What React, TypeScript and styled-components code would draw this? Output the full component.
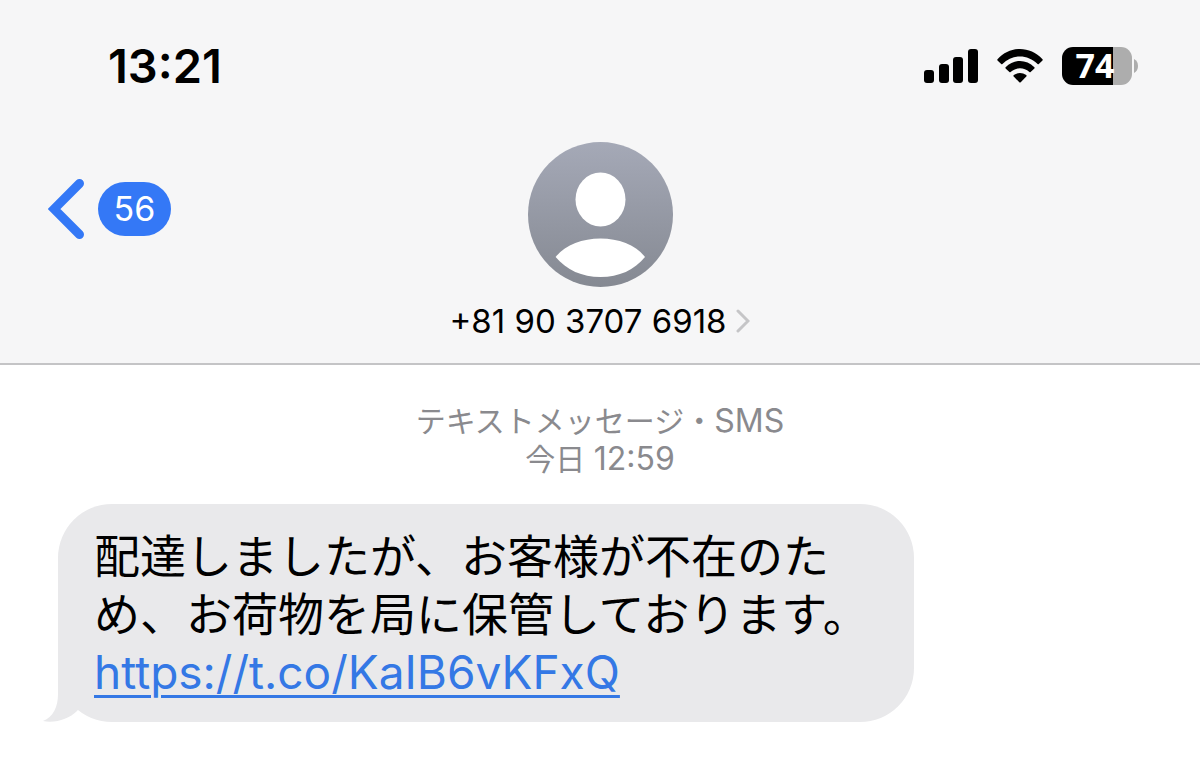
import React from 'react';
import styled, { createGlobalStyle } from 'styled-components';

const GlobalStyle = createGlobalStyle`
  *, *::before, *::after { box-sizing: border-box; }
  body {
    margin: 0;
    background: #ffffff;
    color: #000000;
    font-family: Inter, "Noto Sans CJK JP", sans-serif;
  }
`;

const Header = styled.header`
  background: #f6f6f7;
  border-bottom: 2px solid #c4c4c6;
`;

const StatusBar = styled.div`
  display: flex;
  align-items: center;
  justify-content: space-between;
  padding: 36px 62px 0 108px;
`;

const Clock = styled.time`
  font-size: 47px;
  font-weight: 600;
  line-height: 60px;
`;

const Indicators = styled.div`
  display: flex;
  align-items: center;
  gap: 19px;
`;

const Battery = styled.div`
  display: flex;
  align-items: center;
  gap: 2px;
`;

const BatteryCell = styled.div<{ $level: number }>`
  width: 70px;
  height: 38px;
  padding-right: 4px;
  border-radius: 11px;
  background: linear-gradient(to right, #000000 ${p => p.$level}%, #adadad ${p => p.$level}%);
  color: #ffffff;
  font-family: "Open Sans", sans-serif;
  font-size: 34px;
  font-weight: 700;
  line-height: 36px;
  text-align: center;
`;

const NavBar = styled.nav`
  display: grid;
  grid-template-columns: 1fr auto 1fr;
  align-items: start;
  padding: 46px 48px 22px;
`;

const BackButton = styled.button`
  display: flex;
  align-items: center;
  justify-self: start;
  gap: 12px;
  margin-top: 36px;
  padding: 0;
  border: 0;
  background: none;
  cursor: pointer;
`;

const UnreadBadge = styled.span`
  min-width: 73px;
  padding: 0 15px;
  border-radius: 27px;
  background: #3478f6;
  color: #ffffff;
  font-family: Inter, sans-serif;
  font-size: 34px;
  line-height: 54px;
  text-align: center;
`;

const ContactButton = styled.button`
  display: flex;
  flex-direction: column;
  align-items: center;
  gap: 14px;
  padding: 0;
  border: 0;
  background: none;
  color: inherit;
  font-family: Inter, sans-serif;
  font-size: 33px;
  line-height: 40px;
  cursor: pointer;
`;

const ContactName = styled.span`
  display: flex;
  align-items: center;
  gap: 10px;
`;

const Thread = styled.main`
  padding: 37px 58px 56px;
`;

const ThreadInfo = styled.p`
  margin: 0 0 26px;
  color: #8a8a8e;
  font-size: 30px;
  line-height: 38px;
  text-align: center;
`;

const LatinText = styled.span`
  font-size: 32px;
`;

const Bubble = styled.article`
  position: relative;
  width: fit-content;
  max-width: 79%;
  padding: 23px 36px 21px;
  border-radius: 54px;
  background: #e9e9eb;
  font-size: 46px;
  line-height: 58px;
`;

const BubbleText = styled.p`
  margin: 0;
`;

const BubbleLink = styled.a`
  display: block;
  color: #3478e5;
  text-decoration: underline;
  text-decoration-thickness: 3px;
  text-underline-offset: 6px;
`;

const Tail = styled.svg`
  position: absolute;
  left: -16px;
  bottom: 0;
`;

function SignalIcon() {
  return (
    <svg width="54" height="34" viewBox="0 0 54 34" role="img" aria-label="Signal">
      <rect x="0" y="21" width="10" height="13" rx="3" />
      <rect x="15" y="15" width="10" height="19" rx="3" />
      <rect x="29" y="8" width="10" height="26" rx="3" />
      <rect x="44" y="0" width="10" height="34" rx="3" />
    </svg>
  );
}

function WifiIcon() {
  return (
    <svg width="46" height="34" viewBox="0 0 46 34" role="img" aria-label="Wi-Fi">
      <path d="M.5 10.2C13 -3.4 33 -3.4 45.5 10.2Q46 10.8 45.5 11.4L41.8 15Q41.2 15.5 40.6 14.9C30.5 4.9 15.5 4.9 5.4 14.9Q4.8 15.5 4.2 15L.5 11.4Q0 10.8 .5 10.2Z" />
      <path d="M8.6 18.2C16.9 9.9 29.1 9.9 37.4 18.2Q37.9 18.8 37.4 19.4L33.6 23Q33 23.5 32.4 23C26.8 18 19.2 18 13.6 23Q13 23.5 12.4 23L8.6 19.4Q8.1 18.8 8.6 18.2Z" />
      <path d="M16.8 26.1C20.6 23.2 25.4 23.2 29.2 26.1Q29.9 26.7 29.3 27.4L23.7 33.3Q23 33.9 22.3 33.3L16.7 27.4Q16.1 26.7 16.8 26.1Z" />
    </svg>
  );
}

function BackChevron() {
  return (
    <svg width="38" height="62" viewBox="0 0 38 62" aria-hidden="true">
      <path d="M31.5 5.5L6 31L31.5 56.5" fill="none" stroke="#3478f6" strokeWidth="9" strokeLinecap="round" strokeLinejoin="miter" />
    </svg>
  );
}

function Avatar() {
  return (
    <svg width="145" height="145" viewBox="0 0 145 145" aria-hidden="true">
      <defs>
        <linearGradient id="avatarFill" x1="0" y1="0" x2="0" y2="1">
          <stop offset="0" stopColor="#a5a9b7" />
          <stop offset="1" stopColor="#858992" />
        </linearGradient>
      </defs>
      <circle cx="72.5" cy="72.5" r="72.5" fill="url(#avatarFill)" />
      <ellipse cx="72.5" cy="57.5" rx="25" ry="27" fill="#ffffff" />
      <path d="M27.6 115C37 103 54 96.5 72.5 96.5S108 103 117 115C106.5 128 91 135 72.5 135S38.5 128 27.6 115Z" fill="#ffffff" />
    </svg>
  );
}

export default function App() {
  return (
    <>
      <GlobalStyle />
      <Header>
        <StatusBar>
          <Clock>13:21</Clock>
          <Indicators>
            <SignalIcon />
            <WifiIcon />
            <Battery>
              <BatteryCell $level={73}>74</BatteryCell>
              <svg width="4" height="14" viewBox="0 0 4 14" aria-hidden="true">
                <path d="M0 0Q4 2 4 7T0 14Z" fill="#adadad" />
              </svg>
            </Battery>
          </Indicators>
        </StatusBar>
        <NavBar>
          <BackButton type="button">
            <BackChevron />
            <UnreadBadge>56</UnreadBadge>
          </BackButton>
          <ContactButton type="button">
            <Avatar />
            <ContactName>
              +81 90 3707 6918
              <svg width="14" height="24" viewBox="0 0 14 24" aria-hidden="true">
                <path d="M2 2L12 12L2 22" fill="none" stroke="#c5c5c7" strokeWidth="3" strokeLinecap="round" />
              </svg>
            </ContactName>
          </ContactButton>
        </NavBar>
      </Header>
      <Thread lang="ja">
        <ThreadInfo>
          テキストメッセージ・<LatinText>SMS</LatinText>
          <br />
          今日 <LatinText>12:59</LatinText>
        </ThreadInfo>
        <Bubble>
          <Tail width="46" height="64" viewBox="0 0 46 64" aria-hidden="true">
            <path d="M16 0V36C16 49 11 59 1 63C13 65.5 27 61 35 53L46 40V0Z" fill="#e9e9eb" />
          </Tail>
          <BubbleText>配達しましたが、お客様が不在のため、お荷物を局に保管しております。</BubbleText>
          <BubbleLink href="https://t.co/KaIB6vKFxQ">https://t.co/KaIB6vKFxQ</BubbleLink>
        </Bubble>
      </Thread>
    </>
  );
}
